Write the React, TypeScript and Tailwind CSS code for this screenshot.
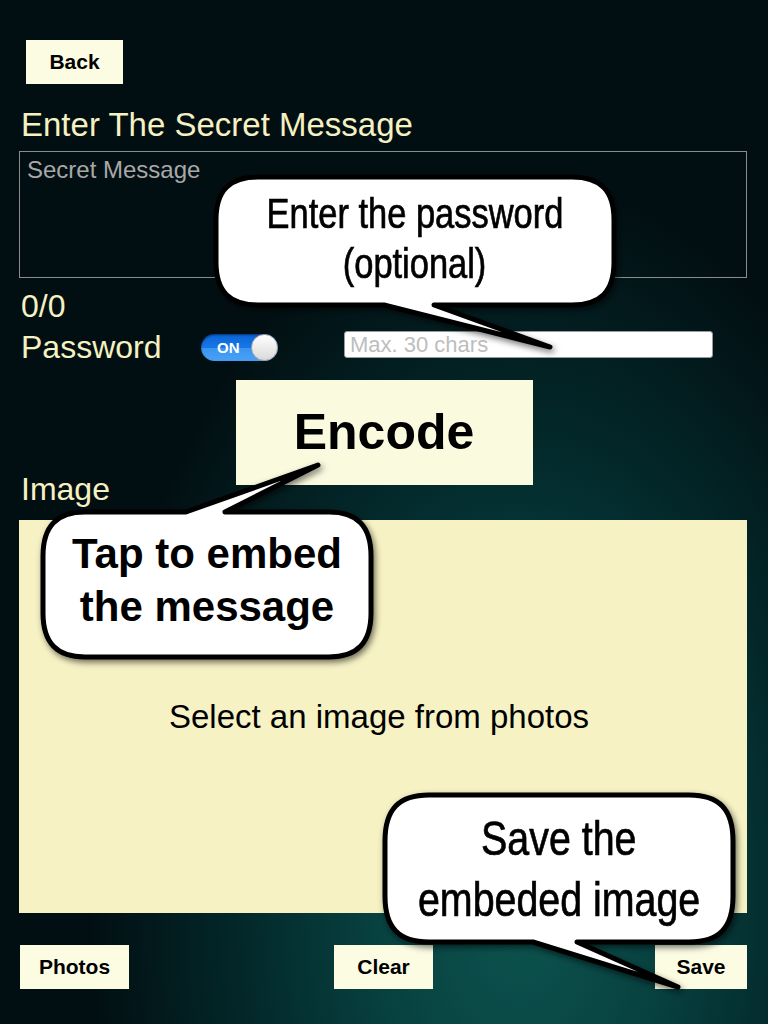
import React from "react";

const CreamButton = ({ label, className }: { label: string; className: string }) => {
	return (
		<button className={`h-[44px] bg-[#fcfce3] text-[21px] font-bold text-black flex items-center justify-center ${className}`}>
			{label}
		</button>
	);
};

const Toggle = () => {
	return (
		<div className="relative w-[77px] h-[27px] rounded-full bg-[linear-gradient(#0a62d6,#1877e6_50%,#3a95f1_52%,#4aa1f5)] shadow-[inset_0_1px_2px_rgba(0,0,0,0.5)]">
			<span className="absolute left-[16px] top-0 h-[27px] leading-[27px] text-[15px] font-bold text-white">ON</span>
			<span className="absolute right-0 top-0 size-[27px] rounded-full border border-[#a9a9a9] bg-[linear-gradient(#ffffff,#d9d9d9)]"></span>
		</div>
	);
};

// narrow comic lettering: Liberation Sans squeezed horizontally
const NarrowLine = ({ children }: { children: string }) => {
	return (
		<span className="block whitespace-nowrap scale-x-[0.82] [-webkit-text-stroke:0.7px_black]">{children}</span>
	);
};

const Bubbles = () => {
	return (
		<svg
			className="absolute left-0 top-0 pointer-events-none"
			width={768}
			height={1024}
			viewBox="0 0 768 1024"
		>
			<defs>
				<filter id="sh" x="-20%" y="-20%" width="140%" height="140%">
					<feDropShadow dx="2" dy="3" stdDeviation="3" floodColor="#000" floodOpacity="0.55" />
				</filter>
			</defs>
			<g fill="#fff" stroke="#000" strokeWidth={5} strokeLinejoin="round" filter="url(#sh)">
				<path d="M258,177 H572 C600,177 614,190 614,220 V262 C614,292 600,305 572,305 H434 L550,347 L384,305 H258 C230,305 216,292 216,262 V220 C216,190 230,177 258,177 Z" />
				<path d="M85,512 H186 L318,465 L225,512 H329 C357,512 371,526 371,556 V613 C371,643 357,657 329,657 H85 C57,657 43,643 43,613 V556 C43,526 57,512 85,512 Z" />
				<path d="M429,795 H689 C719,795 733,809 733,841 V896 C733,928 719,942 689,942 H577 L678,987 L533,942 H429 C399,942 385,928 385,896 V841 C385,809 399,795 429,795 Z" />
			</g>
		</svg>
	);
};

export default function App() {
	return (
		<div className="relative w-[768px] h-[1024px] overflow-hidden bg-[#020d10] bg-[radial-gradient(ellipse_430px_720px_at_520px_900px,#0c544f_0%,#07403f_35%,#03282a_65%,#020f12_100%)] font-['Liberation_Sans',Arial,sans-serif]">
			<div className="flex flex-col px-[19px] pt-[40px]">
				<CreamButton label="Back" className="ml-[7px] w-[97px]" />

				<h1 className="mt-[24px] ml-[2px] text-[33px] leading-[34px] text-[#f6f1c2]">
					Enter The Secret Message
				</h1>

				<div className="mt-[9px] w-[728px] h-[127px] border border-[#8c8c8c] pl-[7px] pt-[6px]">
					<span className="text-[24px] leading-[24px] text-[#a8a8a8]">Secret Message</span>
				</div>

				<div className="mt-[12px] ml-[2px] text-[32px] leading-[32px] text-[#f6f1c2]">0/0</div>

				<div className="mt-[9px] flex items-center">
					<span className="w-[182px] pl-[2px] text-[32px] leading-[32px] text-[#f6f1c2]">Password</span>
					<Toggle />
					<div className="ml-[66px] mb-[5px] w-[369px] h-[27px] rounded-[3px] border border-[#9a9a9a] bg-white pl-[5px] flex items-center">
						<span className="text-[22px] leading-[22px] text-[#bdbdbd]">Max. 30 chars</span>
					</div>
				</div>

				<button className="mt-[17px] mx-auto w-[297px] h-[105px] bg-[#fafadf] text-[50px] font-bold text-black flex items-center justify-center">
					Encode
				</button>

				<div className="-mt-[12px] ml-[2px] text-[32px] leading-[32px] text-[#f6f1c2]">Image</div>

				<div className="mt-[15px] w-[728px] h-[393px] bg-[#f6f2c4] flex items-center justify-center">
					<span className="pr-[8px] text-[33px] leading-[32px] text-black">Select an image from photos</span>
				</div>

				<div className="mt-[32px] flex">
					<CreamButton label="Photos" className="ml-[1px] w-[109px]" />
					<CreamButton label="Clear" className="ml-[205px] w-[99px]" />
					<CreamButton label="Save" className="ml-[222px] w-[92px]" />
				</div>
			</div>

			<Bubbles />

			<div className="absolute left-[216px] top-[177px] w-[398px] h-[128px] pb-[4px] flex flex-col items-center justify-center text-[42px] leading-[50px] text-black">
				<NarrowLine>Enter the password</NarrowLine>
				<NarrowLine>(optional)</NarrowLine>
			</div>

			<div className="absolute left-[43px] top-[512px] w-[328px] h-[145px] pb-[10px] flex flex-col items-center justify-center text-[42px] leading-[53px] font-bold text-black">
				<span>Tap to embed</span>
				<span>the message</span>
			</div>

			<div className="absolute left-[385px] top-[795px] w-[348px] h-[147px] flex flex-col items-center justify-center text-[48px] leading-[61px] text-black">
				<NarrowLine>Save the</NarrowLine>
				<NarrowLine>embeded image</NarrowLine>
			</div>
		</div>
	);
}
